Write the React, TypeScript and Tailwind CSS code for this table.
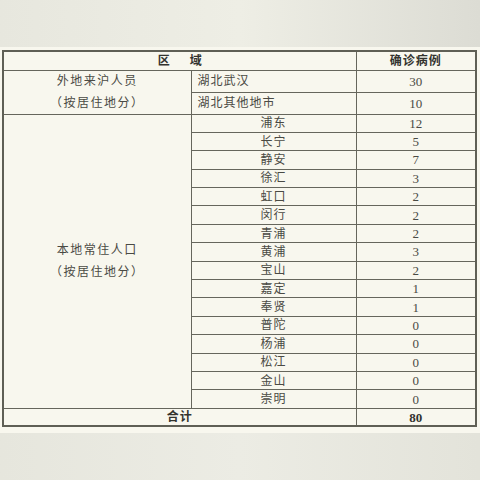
const outside = [
    { city: '湖北武汉', count: 30 },
    { city: '湖北其他地市', count: 10 },
];

const districts: [string, number][] = [
    ['浦东', 12],
    ['长宁', 5],
    ['静安', 7],
    ['徐汇', 3],
    ['虹口', 2],
    ['闵行', 2],
    ['青浦', 2],
    ['黄浦', 3],
    ['宝山', 2],
    ['嘉定', 1],
    ['奉贤', 1],
    ['普陀', 0],
    ['杨浦', 0],
    ['松江', 0],
    ['金山', 0],
    ['崇明', 0],
];

const cjk = "font-['Liberation_Serif','Noto_Sans_CJK_SC',serif]";
const cell = 'border-[1.5px] border-[#66665c] p-0';

export default function App() {
    return (
        <div className={`w-[480px] h-[480px] flex flex-col bg-[#ebebe3] text-[#4a4a44] ${cjk}`}>
            <div className="h-[47px] shrink-0 bg-gradient-to-r from-[#e7e7de] via-[#eeeee5] to-[#dcdcd4]" />

            {/* paper */}
            <div className="h-[386px] shrink-0 bg-[#f8f7ee] pt-[3px] pl-[2px] pr-[5px]">
                <table className="w-[473px] table-fixed border-collapse border-2 border-[#5f5f55] text-[12px] leading-none">
                    <colgroup>
                        <col className="w-[188px]" />
                        <col className="w-[165px]" />
                        <col className="w-[120px]" />
                    </colgroup>
                    <tbody>
                        {/* header */}
                        <tr className="h-[19px]">
                            <td colSpan={2} className={`${cell} text-center font-bold text-[#33332e]`}>
                                <span className="inline-flex gap-[20px]">
                                    <span>区</span>
                                    <span>域</span>
                                </span>
                            </td>
                            <td className={`${cell} text-center font-bold tracking-[1px] text-[#33332e]`}>确诊病例</td>
                        </tr>

                        {outside.map((row, i) => (
                            <tr key={row.city} className="h-[22px]">
                                {i === 0 && (
                                    <td rowSpan={2} className={`${cell} text-center tracking-[1.5px]`}>
                                        <div className="flex flex-col gap-[10px]">
                                            <span>外地来沪人员</span>
                                            <span>（按居住地分）</span>
                                        </div>
                                    </td>
                                )}
                                <td className={`${cell} pl-[6px] tracking-[1px]`}>{row.city}</td>
                                <td className={`${cell} text-center text-[13px]`}>{row.count}</td>
                            </tr>
                        ))}

                        {districts.map(([name, count], i) => (
                            <tr key={name} className="h-[18.4px]">
                                {i === 0 && (
                                    <td rowSpan={16} className={`${cell} text-center tracking-[1.5px]`}>
                                        <div className="flex flex-col gap-[10px]">
                                            <span>本地常住人口</span>
                                            <span>（按居住地分）</span>
                                        </div>
                                    </td>
                                )}
                                <td className={`${cell} text-center tracking-[1px]`}>{name}</td>
                                <td className={`${cell} text-center text-[13px]`}>{count}</td>
                            </tr>
                        ))}

                        {/* total */}
                        <tr className="h-[18px]">
                            <td colSpan={2} className={`${cell} text-center font-bold tracking-[1px] text-[#33332e]`}>合计</td>
                            <td className={`${cell} text-center font-bold text-[13px] text-[#33332e]`}>80</td>
                        </tr>
                    </tbody>
                </table>
            </div>

            <div className="flex-1 bg-gradient-to-r from-[#e6e6dd] via-[#ececE4] to-[#e3e3da]" />
        </div>
    );
}
